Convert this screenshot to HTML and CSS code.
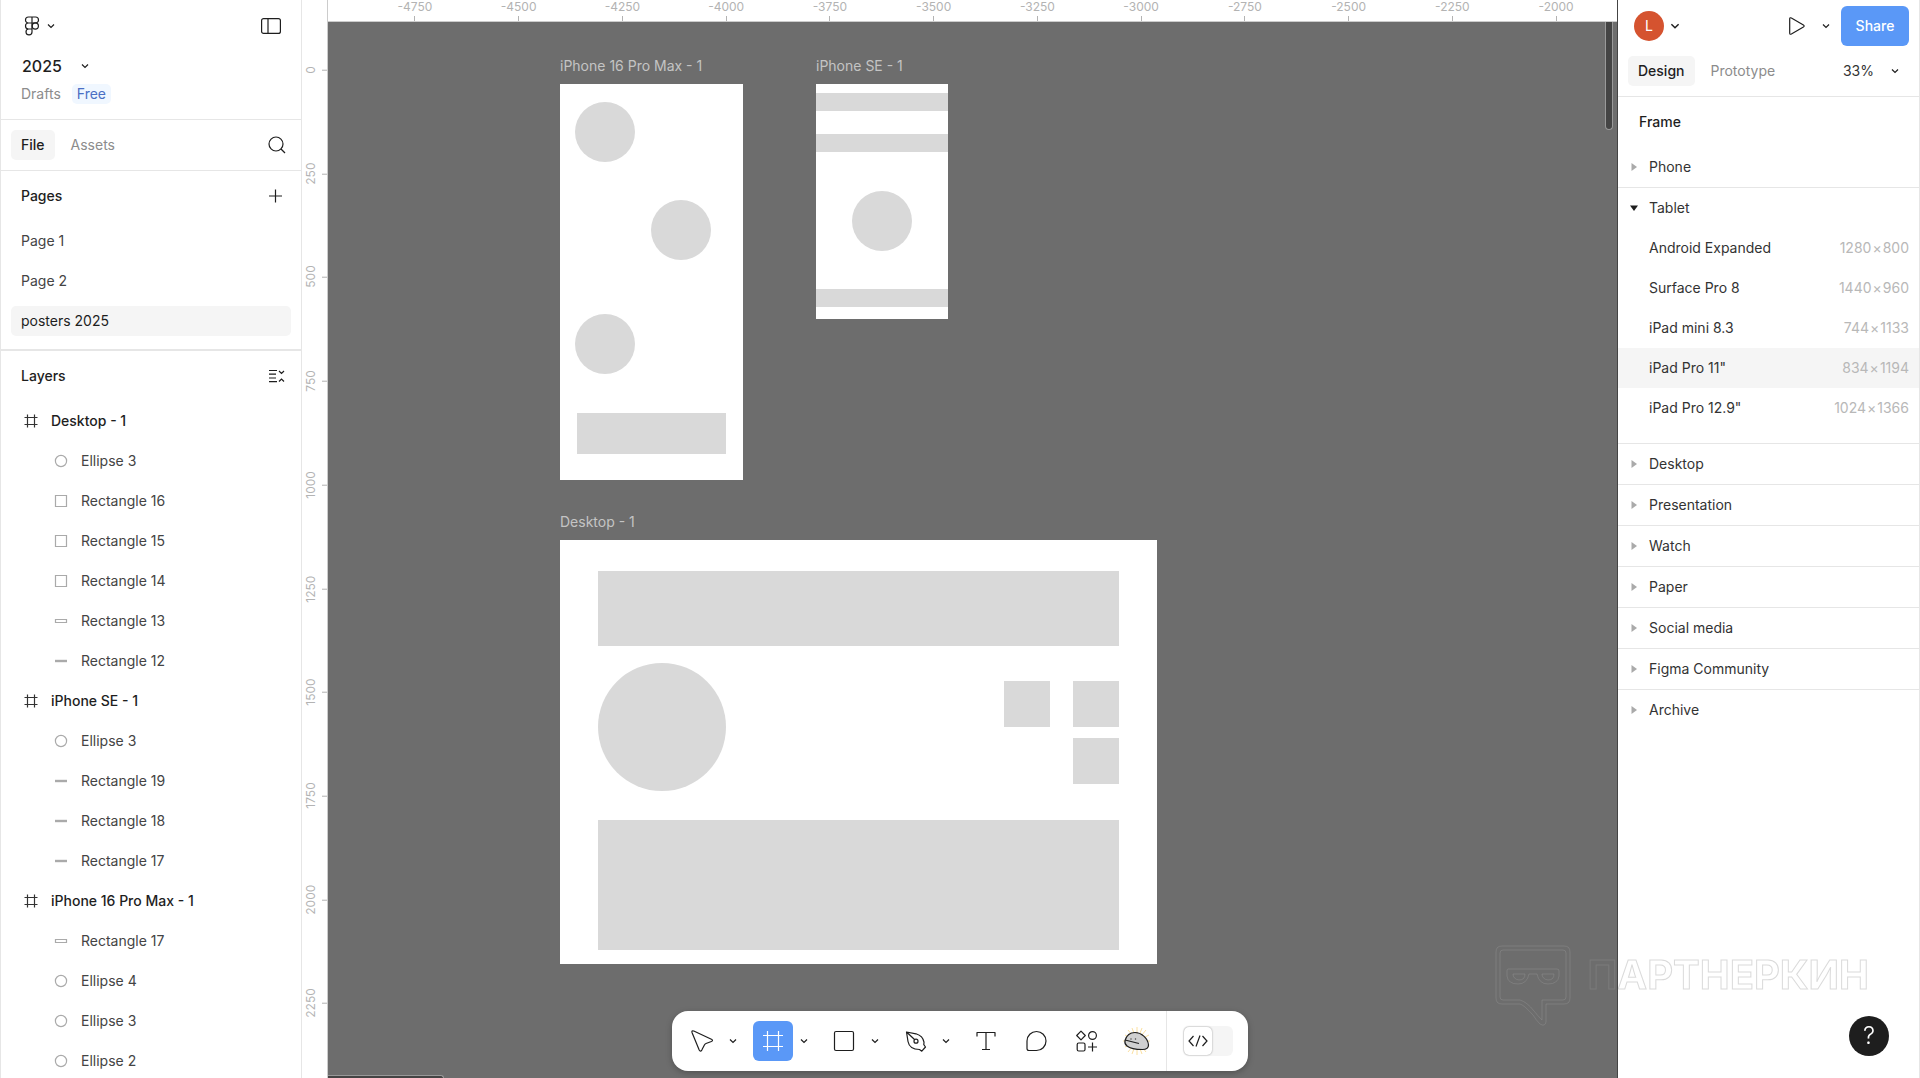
FILE: index.html
```html
<!DOCTYPE html>
<html lang="en">
  <head>
    <meta charset="UTF-8" />
    <meta name="viewport" content="width=device-width, initial-scale=1.0" />
    <title>2025 – Figma</title>
    <link rel="stylesheet" href="styles.css" />
  </head>
  <body>
    <!-- Shared icons -->
    <svg class="sprite" aria-hidden="true">
      <symbol id="chevron" viewBox="0 0 10 10"><path d="M2 3.5l3 3 3-3" /></symbol>
      <symbol id="frame" viewBox="0 0 14 14"><path d="M3.5 0.5v13M10.5 0.5v13M0.5 3.5h13M0.5 10.5h13" /></symbol>
      <symbol id="ellipse" viewBox="0 0 14 14"><circle cx="7" cy="7" r="5.6" /></symbol>
      <symbol id="square" viewBox="0 0 14 14"><path d="M1.5 1.5h11v11h-11z" /></symbol>
      <symbol id="bar" viewBox="0 0 14 14"><path d="M1.5 5.5h11v3h-11z" /></symbol>
      <symbol id="line" viewBox="0 0 14 14"><path d="M1 7h12" stroke-width="2.4" /></symbol>
      <symbol id="closed" viewBox="0 0 10 10"><path d="M2.500 1l5.500 4-5.500 4z" /></symbol>
      <symbol id="opened" viewBox="0 0 10 10"><path d="M1 2.500h8l-4 5.500z" /></symbol>
    </svg>

    <div class="app">
      <aside class="panel left-panel">
        <header class="file-header">
          <div class="header-row">
            <button class="icon-button logo" aria-label="Main menu">
              <svg width="16" height="20" viewBox="0 0 16 20">
                <path d="M8 1H4.500a3 3 0 0 0 0 6H8zM8 1h3.500a3 3 0 0 1 0 6H8zM8 7H4.500a3 3 0 0 0 0 6H8zM8 13H4.500a3 3 0 1 0 3.500 3z" />
                <circle cx="11.300" cy="10" r="3.100" />
              </svg>
              <svg width="10" height="10"><use href="#chevron" /></svg>
            </button>
            <button class="icon-button" aria-label="Toggle sidebar">
              <svg width="20" height="16" viewBox="0 0 20 16">
                <rect x="0.600" y="0.600" width="18.800" height="14.800" rx="2" />
                <path d="M7 1v14" />
              </svg>
            </button>
          </div>
          <button class="file-name">
            2025
            <svg width="10" height="10"><use href="#chevron" /></svg>
          </button>
          <div class="file-meta">
            <a href="#drafts">Drafts</a>
            <span class="badge">Free</span>
          </div>
        </header>

        <nav class="tabs left-tabs">
          <button class="tab active">File</button>
          <button class="tab">Assets</button>
          <button class="icon-button search" aria-label="Search">
            <svg width="18" height="18" viewBox="0 0 18 18">
              <circle cx="8" cy="8" r="7" />
              <path d="M13 13l4 4" />
            </svg>
          </button>
        </nav>

        <section class="pages">
          <div class="section-title">
            <h2>Pages</h2>
            <button class="icon-button" aria-label="Add page">
              <svg width="16" height="14" viewBox="0 0 16 14"><path d="M6.500 0.500v13M0 7h13" /></svg>
            </button>
          </div>
          <ul>
            <li><button class="page">Page 1</button></li>
            <li><button class="page">Page 2</button></li>
            <li><button class="page active">posters 2025</button></li>
          </ul>
        </section>

        <section class="layers">
          <div class="section-title">
            <h2>Layers</h2>
            <button class="icon-button" aria-label="Collapse layers">
              <svg width="16" height="14" viewBox="0 0 16 14">
                <path d="M0 1.500h8M0 5.200h7M0 9h7M0 12.700h8M10 2l2.500 2.500L15 2M10 12.500l2.500-2.500 2.500 2.500" />
              </svg>
            </button>
          </div>
          <ul>
            <li><button class="layer parent"><svg><use href="#frame" /></svg>Desktop - 1</button></li>
            <li><button class="layer"><svg><use href="#ellipse" /></svg>Ellipse 3</button></li>
            <li><button class="layer"><svg><use href="#square" /></svg>Rectangle 16</button></li>
            <li><button class="layer"><svg><use href="#square" /></svg>Rectangle 15</button></li>
            <li><button class="layer"><svg><use href="#square" /></svg>Rectangle 14</button></li>
            <li><button class="layer"><svg><use href="#bar" /></svg>Rectangle 13</button></li>
            <li><button class="layer"><svg><use href="#line" /></svg>Rectangle 12</button></li>
            <li><button class="layer parent"><svg><use href="#frame" /></svg>iPhone SE - 1</button></li>
            <li><button class="layer"><svg><use href="#ellipse" /></svg>Ellipse 3</button></li>
            <li><button class="layer"><svg><use href="#line" /></svg>Rectangle 19</button></li>
            <li><button class="layer"><svg><use href="#line" /></svg>Rectangle 18</button></li>
            <li><button class="layer"><svg><use href="#line" /></svg>Rectangle 17</button></li>
            <li><button class="layer parent"><svg><use href="#frame" /></svg>iPhone 16 Pro Max - 1</button></li>
            <li><button class="layer"><svg><use href="#bar" /></svg>Rectangle 17</button></li>
            <li><button class="layer"><svg><use href="#ellipse" /></svg>Ellipse 4</button></li>
            <li><button class="layer"><svg><use href="#ellipse" /></svg>Ellipse 3</button></li>
            <li><button class="layer"><svg><use href="#ellipse" /></svg>Ellipse 2</button></li>
          </ul>
        </section>
      </aside>

      <main class="workspace">
        <div class="ruler ruler-y">
          <div class="marks">
            <span>0</span><span>250</span><span>500</span><span>750</span><span>1000</span>
            <span>1250</span><span>1500</span><span>1750</span><span>2000</span><span>2250</span>
          </div>
        </div>
        <div class="ruler ruler-x">
          <div class="marks">
            <span>-4750</span><span>-4500</span><span>-4250</span><span>-4000</span>
            <span>-3750</span><span>-3500</span><span>-3250</span><span>-3000</span>
            <span>-2750</span><span>-2500</span><span>-2250</span><span>-2000</span>
          </div>
        </div>

        <div class="canvas">
          <div class="artboard iphone-16">
            <span class="artboard-name">iPhone 16 Pro Max - 1</span>
            <div class="shape circle top"></div>
            <div class="shape circle middle"></div>
            <div class="shape circle bottom"></div>
            <div class="shape button-block"></div>
          </div>
          <div class="artboard iphone-se">
            <span class="artboard-name">iPhone SE - 1</span>
            <div class="shape strip header"></div>
            <div class="shape strip subheader"></div>
            <div class="shape circle center"></div>
            <div class="shape strip footer"></div>
          </div>
          <div class="artboard desktop">
            <span class="artboard-name">Desktop - 1</span>
            <div class="shape banner"></div>
            <div class="shape big-circle"></div>
            <div class="shape tile tile-1"></div>
            <div class="shape tile tile-2"></div>
            <div class="shape tile tile-3"></div>
            <div class="shape content"></div>
          </div>
          <div class="scroll-thumb vertical"></div>
          <div class="scroll-thumb horizontal"></div>
        </div>
      </main>

      <aside class="panel right-panel">
        <header class="share-row">
          <button class="icon-button account" aria-label="Account">
            <span class="avatar">L</span>
            <svg width="12" height="12"><use href="#chevron" /></svg>
          </button>
          <div class="share-actions">
            <button class="icon-button" aria-label="Present">
              <svg width="16" height="18" viewBox="0 0 16 18">
                <path d="M0.700 2v14q0 1.800 1.700 1l12-7q1.500-1 0-2l-12-7q-1.700-.8-1.700 1z" />
              </svg>
            </button>
            <button class="icon-button" aria-label="Present options">
              <svg width="10" height="10"><use href="#chevron" /></svg>
            </button>
            <button class="share">Share</button>
          </div>
        </header>

        <nav class="tabs right-tabs">
          <button class="tab active">Design</button>
          <button class="tab">Prototype</button>
          <button class="zoom">
            33%
            <svg width="10" height="10"><use href="#chevron" /></svg>
          </button>
        </nav>

        <div class="section-title frame-title"><h2>Frame</h2></div>

        <section class="group">
          <button class="group-name"><svg><use href="#closed" /></svg>Phone</button>
        </section>
        <section class="group open">
          <button class="group-name"><svg><use href="#opened" /></svg>Tablet</button>
          <ul>
            <li><button class="preset">Android Expanded <span class="size">1280<i>×</i>800</span></button></li>
            <li><button class="preset">Surface Pro 8 <span class="size">1440<i>×</i>960</span></button></li>
            <li><button class="preset">iPad mini 8.3 <span class="size">744<i>×</i>1133</span></button></li>
            <li><button class="preset hovered">iPad Pro 11" <span class="size">834<i>×</i>1194</span></button></li>
            <li><button class="preset">iPad Pro 12.9" <span class="size">1024<i>×</i>1366</span></button></li>
          </ul>
        </section>
        <section class="group">
          <button class="group-name"><svg><use href="#closed" /></svg>Desktop</button>
        </section>
        <section class="group">
          <button class="group-name"><svg><use href="#closed" /></svg>Presentation</button>
        </section>
        <section class="group">
          <button class="group-name"><svg><use href="#closed" /></svg>Watch</button>
        </section>
        <section class="group">
          <button class="group-name"><svg><use href="#closed" /></svg>Paper</button>
        </section>
        <section class="group">
          <button class="group-name"><svg><use href="#closed" /></svg>Social media</button>
        </section>
        <section class="group">
          <button class="group-name"><svg><use href="#closed" /></svg>Figma Community</button>
        </section>
        <section class="group">
          <button class="group-name"><svg><use href="#closed" /></svg>Archive</button>
        </section>
      </aside>
    </div>

    <!-- Floating toolbar -->
    <div class="toolbar">
      <div class="tools">
        <div class="tool-group">
          <button class="tool" aria-label="Move">
            <svg viewBox="0 0 24 24"><path d="M2 3.400 9.200 21q1.200 2.300 2.600.1l2.600-5.200q.5-1 1.600-1.400l5.400-2q2.200-1 0-2.200L3.800 2Q1.400 1.300 2 3.400z" /></svg>
          </button>
          <button class="more" aria-label="Move tools"><svg><use href="#chevron" /></svg></button>
        </div>
        <div class="tool-group">
          <button class="tool active" aria-label="Frame">
            <svg viewBox="0 0 24 24"><path d="M6.500 2v20M17.500 2v20M2 6.500h20M2 17.500h20" /></svg>
          </button>
          <button class="more" aria-label="Region tools"><svg><use href="#chevron" /></svg></button>
        </div>
        <div class="tool-group">
          <button class="tool" aria-label="Rectangle">
            <svg viewBox="0 0 24 24"><rect x="2.500" y="2.500" width="19" height="19" rx="1.500" /></svg>
          </button>
          <button class="more" aria-label="Shape tools"><svg><use href="#chevron" /></svg></button>
        </div>
        <div class="tool-group">
          <button class="tool" aria-label="Pen">
            <svg viewBox="0 0 24 24">
              <path d="M3.500 3 11.800 10.800M3.500 3l9.500 1.800q7 2.200 8 8.400l-.2 2.500 1.700 2.300-3.700 4.200-2.300-1.700Q6.500 20.500 5 12.500z" />
              <circle cx="13" cy="12.200" r="2" />
            </svg>
          </button>
          <button class="more" aria-label="Drawing tools"><svg><use href="#chevron" /></svg></button>
        </div>
        <button class="tool" aria-label="Text">
          <svg viewBox="0 0 24 24"><path d="M3 7.500V3.500h18v4M12 3.500v17M8 20.500h8" /></svg>
        </button>
        <button class="tool" aria-label="Comment">
          <svg viewBox="0 0 24 24"><path d="M12.500 2.500a9.500 9.500 0 1 1 0 19H5q-2 0-2-2V12a9.500 9.500 0 0 1 9.500-9.500z" /></svg>
        </button>
        <button class="tool" aria-label="Actions">
          <svg viewBox="0 0 24 24">
            <path d="M7 2.200 11.300 6.500 7 10.800 2.700 6.500zM18.500 13.500v9M14 18h9" />
            <circle cx="18.500" cy="6.500" r="3.900" />
            <rect x="3.200" y="14" width="7.800" height="8" rx="1.500" />
          </svg>
        </button>
        <button class="tool" aria-label="Plugin">
          <svg class="rock" viewBox="0 0 28 28">
            <path class="glow" d="M15 0v28M1 14h27M6 3l18 22M24 3 6 25M10 1l10 26M20 1 10 27M3 8l24 12M27 8 3 20" />
            <path class="body" d="M3 13.500C4.500 8.500 8 5.500 13 5.500c6 0 13 5.500 13.500 12.500 0 3.500-2 4.500-6 4.500-7 0-12.500-1-15.500-3.500-2-1.500-2.500-3-2-5.500z" />
            <path d="M3 13l14 3.500M9 11.500v1M13.500 11.500v1" />
          </svg>
        </button>
      </div>
      <label class="dev-mode">
        <input type="checkbox" aria-label="Dev Mode" />
        <span class="knob">
          <svg width="20" height="14" viewBox="0 0 20 14"><path d="M5.500 2 1 7l4.500 5M14.500 2 19 7l-4.500 5M12 1.500 8 12.500" /></svg>
        </span>
      </label>
    </div>

    <div class="watermark">
      <svg width="76" height="82" viewBox="0 0 76 82">
        <path d="M7 1h62q6 0 6 6v46q0 6-6 6H51v18q-1 5-6 2-4-4-7-9Q29 60 25 59H7q-6 0-6-6V7q0-6 6-6z" />
        <path d="M8 5h60q3 0 3 3v44q0 3-3 3H47v20q-4-4-8-9-7-9-14-11H8q-3 0-3-3V8q0-3 3-3z" />
        <path d="M13 24h49q2 0 2 2v5q-1 8-11 8-9 0-11-10h-8q-2 10-11 10-10 0-11-8v-5q0-2 1-2zM18 29h12q0 6-6 6-6-1-6-6zM47 29h12q0 6-6 6-6-1-6-6z" />
      </svg>
      <span>ПАРТНЕРКИН</span>
    </div>

    <button class="help" aria-label="Help">?</button>
  </body>
</html>
```
FILE: styles.css
```css
* {
  box-sizing: border-box;
}

body {
  margin: 0;
  font-family: Inter, "Liberation Sans", sans-serif;
  font-size: 14px;
  line-height: 20px;
  color: #444;
  background: #fff;
  overflow: hidden;
}

button {
  font: inherit;
  color: inherit;
  background: none;
  border: none;
  padding: 0;
  cursor: pointer;
}

ul {
  list-style: none;
  margin: 0;
  padding: 0;
}

h2 {
  margin: 0;
  font-size: 14px;
  font-weight: 500;
  color: #1e1e1e;
}

svg {
  display: block;
  flex: none;
  fill: none;
  stroke: #1e1e1e;
  stroke-width: 1.2;
}

.sprite {
  position: absolute;
  width: 0;
  height: 0;
}

.app {
  display: grid;
  grid-template-columns: 302px 1fr 302px;
  height: 100vh;
}

.panel {
  background: #fff;
  border-right: 1px solid #e6e6e6;
  overflow: hidden;
}

.icon-button {
  display: flex;
  align-items: center;
}

/* Left panel */
.left-panel {
  border-left: 1px solid #e6e6e6;
}

.file-header {
  padding: 6px 20px 15px;
  border-bottom: 1px solid #e6e6e6;
}

.header-row {
  display: flex;
  justify-content: space-between;
  height: 40px;
}

.logo {
  gap: 6px;
  padding-left: 3px;
}

.file-name {
  display: flex;
  align-items: center;
  gap: 18px;
  height: 40px;
  margin-bottom: -2px;
  padding-left: 1px;
  font-size: 16px;
  font-weight: 500;
  color: #1e1e1e;
}

.file-meta {
  display: flex;
  gap: 11px;
}

.file-meta a {
  color: #8c8c8c;
  text-decoration: none;
}

.badge {
  padding: 0 5px;
  border-radius: 5px;
  background: #f0f7ff;
  color: #4a6fc4;
}

.tabs {
  display: flex;
  align-items: center;
  padding: 10px;
  border-bottom: 1px solid #e6e6e6;
}

.tab {
  height: 30px;
  padding: 0 10px;
  border-radius: 5px;
  color: #8c8c8c;
}

.tab + .tab {
  margin-left: 6px;
}

.tab.active {
  background: #f5f5f5;
  color: #1e1e1e;
  font-weight: 500;
}

.search {
  margin-left: auto;
  padding-right: 5px;
}

.section-title {
  display: flex;
  align-items: center;
  justify-content: space-between;
  height: 50px;
  padding: 0 16px 0 20px;
}

.pages {
  padding-bottom: 8px;
  border-bottom: 2px solid #e6e6e6;
}

.pages li {
  padding: 5px 10px;
}

.page {
  display: block;
  width: 100%;
  height: 30px;
  padding: 0 10px;
  border-radius: 5px;
  text-align: left;
}

.page.active {
  background: #f5f5f5;
  color: #1e1e1e;
}

.layer {
  display: flex;
  align-items: center;
  gap: 13px;
  width: 100%;
  height: 40px;
  padding-left: 53px;
}

.layer svg {
  width: 14px;
  height: 14px;
  stroke: #aaa;
}

.layer.parent {
  padding-left: 23px;
  font-weight: 500;
  color: #1e1e1e;
}

.layer.parent svg {
  stroke: #333;
}

/* Workspace */
.workspace {
  display: grid;
  grid-template-columns: 26px 1fr;
  grid-template-rows: 22px 1fr;
  min-width: 0;
  min-height: 0;
  border-right: 1px solid #444;
}

.ruler {
  overflow: hidden;
  font-size: 12px;
  line-height: 14px;
  color: #b3b3b3;
}

.marks {
  display: flex;
}

.marks span {
  display: flex;
  flex: 1;
  align-items: center;
  justify-content: space-between;
}

.marks span::after {
  content: "";
  background: #b3b3b3;
}

.ruler-x {
  border-bottom: 1px solid #ccc;
}

.ruler-x .marks {
  width: 1245px;
  height: 21px;
  margin-left: 35px;
}

.ruler-x .marks span {
  flex-direction: column;
}

.ruler-x .marks span::after {
  width: 1px;
  height: 5px;
}

.ruler-y {
  grid-row: span 2;
  border-right: 1px solid #ccc;
}

.ruler-y .marks {
  flex-direction: column;
  height: 1037px;
  margin-top: 18px;
}

/* Turned round so that the numbers read from bottom to top */
.ruler-y .marks span {
  flex-direction: column;
  writing-mode: vertical-rl;
  transform: rotate(180deg);
  padding-right: 2px;
}

.ruler-y .marks span::after {
  width: 5px;
  height: 1px;
}

.canvas {
  position: relative;
  background: #6d6d6d;
  overflow: hidden;
}

.artboard {
  position: absolute;
  background: #fff;
}

.artboard-name {
  position: absolute;
  bottom: 100%;
  left: 0;
  padding-bottom: 8px;
  white-space: nowrap;
  color: #c4c4c4;
}

.shape {
  position: absolute;
  background: #d9d9d9;
}

.iphone-16 {
  left: 232px;
  top: 62px;
  width: 183px;
  height: 396px;
}

.circle {
  width: 60px;
  height: 60px;
  border-radius: 50%;
}

.circle.top {
  left: 15px;
  top: 18px;
}

.circle.middle {
  left: 91px;
  top: 116px;
}

.circle.bottom {
  left: 15px;
  top: 230px;
}

.button-block {
  left: 17px;
  top: 329px;
  width: 149px;
  height: 41px;
}

.iphone-se {
  left: 488px;
  top: 62px;
  width: 132px;
  height: 235px;
}

.strip {
  width: 100%;
  height: 18px;
}

.strip.header {
  top: 9px;
}

.strip.subheader {
  top: 50px;
}

.strip.footer {
  top: 205px;
}

.circle.center {
  left: 36px;
  top: 107px;
}

.desktop {
  left: 232px;
  top: 518px;
  width: 597px;
  height: 424px;
}

.banner {
  left: 38px;
  top: 31px;
  width: 521px;
  height: 75px;
}

.big-circle {
  left: 38px;
  top: 123px;
  width: 128px;
  height: 128px;
  border-radius: 50%;
}

.tile {
  width: 46px;
  height: 46px;
}

.tile-1 {
  left: 444px;
  top: 141px;
}

.tile-2 {
  left: 513px;
  top: 141px;
}

.tile-3 {
  left: 513px;
  top: 198px;
}

.content {
  left: 38px;
  top: 280px;
  width: 521px;
  height: 130px;
}

.scroll-thumb {
  position: absolute;
  background: #444;
  border: 1px solid #999;
}

.scroll-thumb.vertical {
  top: 0;
  right: 4px;
  width: 8px;
  height: 108px;
  border-top: none;
  border-radius: 0 0 4px 4px;
}

.scroll-thumb.horizontal {
  left: 0;
  bottom: 0;
  width: 116px;
  height: 3px;
  border-width: 1px 1px 0 0;
  border-radius: 0 4px 0 0;
}

/* Right panel */
.right-panel {
  color: #333;
}

.frame-title {
  padding-left: 21px;
}

.share-row {
  display: flex;
  align-items: center;
  justify-content: space-between;
  padding: 6px 10px 0 16px;
}

.account {
  gap: 5px;
}

.avatar {
  width: 30px;
  height: 30px;
  border-radius: 50%;
  background: #d5532f;
  color: #fff;
  line-height: 30px;
}

.share-actions {
  display: flex;
  align-items: center;
  gap: 16px;
}

.share {
  width: 68px;
  height: 40px;
  margin-left: -6px;
  border-radius: 6px;
  background: #5a98f7;
  color: #fff;
  font-weight: 500;
}

.zoom {
  display: flex;
  align-items: center;
  gap: 16px;
  margin-left: auto;
  padding-right: 9px;
}

.group {
  border-bottom: 1px solid #e6e6e6;
}

.group:last-child {
  border-bottom: none;
}

.group.open {
  padding-bottom: 15px;
}

.group-name {
  display: flex;
  align-items: center;
  gap: 10px;
  width: 100%;
  height: 40px;
  padding-left: 11px;
}

.group-name svg {
  width: 10px;
  height: 10px;
  fill: #aaa;
  stroke: none;
}

.open .group-name svg {
  fill: #1e1e1e;
}

.preset {
  display: flex;
  align-items: center;
  justify-content: space-between;
  width: 100%;
  height: 40px;
  padding: 0 10px 0 31px;
}

.preset.hovered {
  background: #f5f5f5;
}

.size {
  color: #b8b8b8;
}

.size i {
  margin: 0 1px;
  font-style: normal;
}

/* Toolbar */
.toolbar {
  position: fixed;
  bottom: 7px;
  left: 50%;
  transform: translateX(-50%);
  display: flex;
  height: 60px;
  border-radius: 16px;
  background: #fff;
  box-shadow: 0 2px 6px rgba(0, 0, 0, 0.25);
}

.tools {
  display: flex;
  align-items: center;
  gap: 10px;
  padding: 0 10px;
  border-right: 1px solid #e6e6e6;
}

.tool-group {
  display: flex;
}

.tool {
  display: flex;
  align-items: center;
  justify-content: center;
  width: 40px;
  height: 40px;
  border-radius: 6px;
}

.tool svg {
  width: 24px;
  height: 24px;
  stroke-linejoin: round;
}

.tool.active {
  background: #5a98f7;
}

.tool.active svg {
  stroke: #fff;
}

.more {
  display: flex;
  align-items: center;
  justify-content: center;
  width: 21px;
}

.more svg {
  width: 10px;
  height: 10px;
}

.tool .rock {
  width: 28px;
  height: 28px;
}

.rock .glow {
  stroke: #fbe0a0;
  stroke-width: 1;
}

.rock .body {
  fill: #d0d0d0;
}

.dev-mode {
  display: flex;
  align-items: center;
  position: relative;
  padding: 0 15px 0 16px;
  cursor: pointer;
}

.dev-mode input {
  appearance: none;
  width: 50px;
  height: 30px;
  margin: 0;
  border-radius: 6px;
  background: #f5f5f5;
}

.knob {
  position: absolute;
  left: 17px;
  display: flex;
  align-items: center;
  justify-content: center;
  width: 28px;
  height: 28px;
  border-radius: 5px;
  background: #fff;
  box-shadow: 0 0 2px rgba(0, 0, 0, 0.4);
}

.watermark {
  position: fixed;
  right: 51px;
  bottom: 51px;
  display: flex;
  align-items: flex-start;
  gap: 16px;
  pointer-events: none;
}

.watermark svg {
  stroke: rgba(150, 150, 150, 0.4);
  stroke-width: 1;
}

.watermark span {
  font-size: 40px;
  line-height: 60px;
  font-weight: 700;
  color: transparent;
  -webkit-text-stroke: 1px rgba(150, 150, 150, 0.35);
}

.help {
  position: fixed;
  right: 31px;
  bottom: 22px;
  width: 40px;
  height: 40px;
  border-radius: 50%;
  background: #1e1e1e;
  color: #fff;
  font-size: 24px;
  font-weight: 300;
}
```
